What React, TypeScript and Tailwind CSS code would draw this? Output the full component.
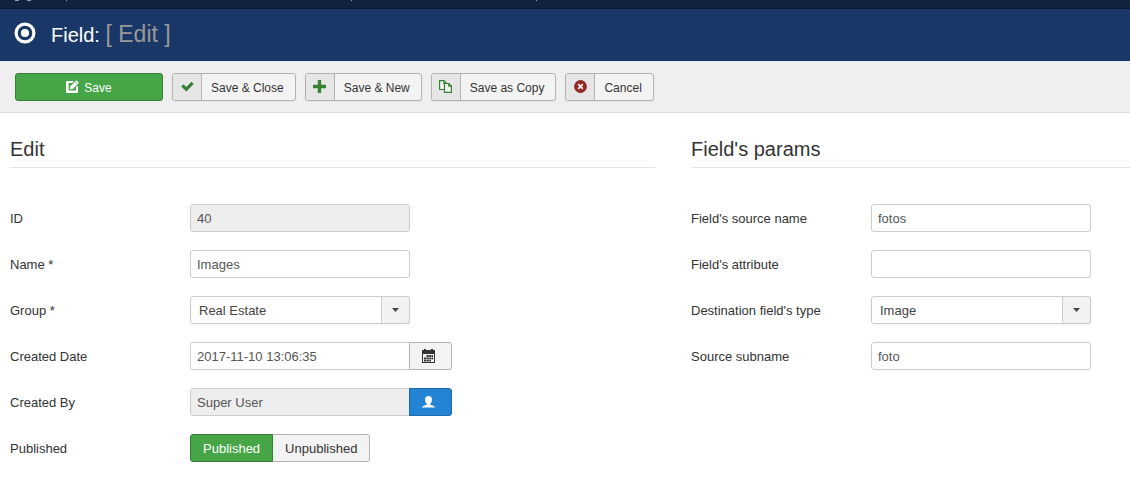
import { useState, type ReactNode } from 'react';

const font = "font-['Liberation_Sans',Arial,sans-serif]";
const inputBase = 'h-7 border border-[#ccc] px-1.5 text-[13px] text-[#555] outline-none';

function Row({ label, id, children }: { label: string; id: string; children: ReactNode }) {
  return (
    <div className="flex h-7 items-center">
      <label htmlFor={id} className="w-[180px] shrink-0 pt-0.5">{label}</label>
      {children}
    </div>
  );
}

function TextField({ label, id, value, readOnly = false }: { label: string; id: string; value: string; readOnly?: boolean }) {
  return (
    <Row label={label} id={id}>
      <input id={id} type="text" defaultValue={value} readOnly={readOnly}
        className={`${inputBase} w-[220px] rounded-[3px] ${readOnly ? 'bg-[#eee]' : 'bg-white'}`} />
    </Row>
  );
}

function SelectField({ label, id, options }: { label: string; id: string; options: string[] }) {
  return (
    <Row label={label} id={id}>
      <div className="relative w-[220px]">
        <select id={id} className="block h-7 w-full appearance-none rounded-[3px] border border-[#ccc] bg-white pt-0.5 pr-8 pl-2 text-[13px] text-[#444] shadow-[0_1px_2px_rgba(0,0,0,0.05)] outline-none">
          {options.map((o) => <option key={o}>{o}</option>)}
        </select>
        <span className="pointer-events-none absolute inset-y-0 right-0 flex w-[29px] items-center justify-center rounded-r-[3px] border border-[#ccc] bg-[#f2f2f2]">
          <svg width="7" height="4" viewBox="0 0 7 4" aria-hidden="true"><path d="M0 0h7L3.5 4z" fill="#444" /></svg>
        </span>
      </div>
    </Row>
  );
}

function ToolButton({ icon, children }: { icon: ReactNode; children: ReactNode }) {
  return (
    <button type="button" className="flex h-7 items-center rounded-[3px] border border-[#b3b3b3] bg-[#f3f3f3] shadow-[0_1px_2px_rgba(0,0,0,0.05)]">
      <span className="flex h-full w-[29px] items-center justify-center rounded-l-[2px] border-r border-[#b3b3b3] bg-[#e6e6e6]">{icon}</span>
      <span className="pt-0.5 pr-[11px] pl-[9px] whitespace-nowrap">{children}</span>
    </button>
  );
}

function TargetIcon() {
  return (
    <svg width="22" height="22" viewBox="0 0 22 22" aria-hidden="true">
      <circle cx="11" cy="11" r="8.9" fill="none" stroke="#fff" strokeWidth="3.2" />
      <circle cx="11" cy="11" r="4.1" fill="#fff" />
    </svg>
  );
}

function EditIcon() {
  return (
    <svg width="13" height="13" viewBox="0 0 13 13" aria-hidden="true">
      <path d="M1 1h7L6 3H2.6v7.4H10V7.2l2-2V12c0 .6-.4 1-1 1H1c-.6 0-1-.4-1-1V2c0-.6.4-1 1-1z" fill="#fff" />
      <path d="M4.4 6.2L10.4.2 13 2.8l-6 6-3.3.7z" fill="#fff" />
      <path d="M9 1.6L11.6 4.2" stroke="#46a546" strokeWidth=".6" />
    </svg>
  );
}

function CheckIcon() {
  return (
    <svg width="13" height="13" viewBox="0 0 13 13" aria-hidden="true">
      <path d="M.2 6.6l2.3-2.3 2.8 2.6L10.5 1.7l2.3 2.3-7.5 7.5z" fill="#378137" />
    </svg>
  );
}

function PlusIcon() {
  return (
    <svg width="13" height="13" viewBox="0 0 13 13" aria-hidden="true">
      <path d="M4.8 0h3.4v4.800H13v3.400H8.200V13H4.800V8.200H0V4.800h4.800z" fill="#378137" />
    </svg>
  );
}

function CopyIcon() {
  return (
    <svg width="13" height="13" viewBox="0 0 13 13" fill="#f5f5f5" stroke="#378137" strokeWidth="1.2" aria-hidden="true">
      <path d="M.6.6h4.300l2.600 2.600v6.300H.6z" />
      <path d="M4.900.6v2.700h2.600" fill="none" />
      <path d="M5.500 3.500h4.300l2.600 2.600v6.300H5.500z" />
      <path d="M9.700 3.500v2.700h2.700" fill="none" />
    </svg>
  );
}

function CancelIcon() {
  return (
    <svg width="13" height="13" viewBox="0 0 13 13" aria-hidden="true">
      <circle cx="6.5" cy="6.5" r="6.4" fill="#942a25" />
      <path d="M4.200 4.200l4.600 4.600M8.800 4.200L4.200 8.800" stroke="#eee" strokeWidth="1.800" />
    </svg>
  );
}

function CalendarIcon() {
  return (
    <svg width="13" height="14" viewBox="0 0 13 14" aria-hidden="true">
      <path d="M0 1h2V0h2v1h5V0h2v1h2v13H0z" fill="#333" />
      <path d="M1 5h11v8H1z" fill="#f3f3f3" />
      <path d="M4 6h7v2H4zM2 8.500h9v2H2zM2 11h7v1.500H2z" fill="#333" />
      <path d="M4.500 5v8M7 5v8M9.500 5v8" stroke="#f3f3f3" strokeWidth=".5" />
    </svg>
  );
}

function UserIcon() {
  return (
    <svg width="13" height="12" viewBox="0 0 13 12" aria-hidden="true">
      <path d="M6.500 0C4.300 0 3 1.300 3 3.500c0 1.900.7 3.300 1.700 4.100v1.100C2.700 9.200.3 9.700 0 11.500h13c-.3-1.800-2.700-2.300-4.700-2.800V7.600c1-.8 1.700-2.200 1.700-4.100C10 1.300 8.700 0 6.500 0z" fill="#fff" />
    </svg>
  );
}

export default function App() {
  const [published, setPublished] = useState(true);
  return (
    <div className={`min-h-screen bg-white text-[13px] leading-[18px] text-[#333] ${font}`}>
      <div className="h-[9px] overflow-hidden border-b border-[#0c192e] bg-[#10223e]">
        <svg className="block" width="560" height="2" viewBox="0 0 560 2" aria-hidden="true">
          <path d="M15 0h4v1h-4zM27 0h4v1h-4zM66 0h1v1h-1zM351 0h1v1h-1zM536 0h1v1h-1z" fill="#9aa0a8" />
        </svg>
      </div>
      <header className="flex h-[52px] items-center gap-[15px] bg-[#1a3867] px-3.5 pb-1 text-white">
        <TargetIcon />
        <h1 className="pt-0.5 text-[20px] leading-7">
          Field: <small className="text-[23px] text-[#999]">[ Edit ]</small>
        </h1>
      </header>
      <div className="flex h-[52px] items-center gap-[9px] border-b border-[#ddd] bg-[#efefef] px-[15px] text-[12px]">
        <button type="button" className="flex h-7 w-[148px] items-center justify-center gap-[5px] rounded-[3px] border border-[#378137] bg-[#46a546] text-white">
          <EditIcon /><span className="pt-0.5">Save</span>
        </button>
        <ToolButton icon={<CheckIcon />}>Save &amp; Close</ToolButton>
        <ToolButton icon={<PlusIcon />}>Save &amp; New</ToolButton>
        <ToolButton icon={<CopyIcon />}>Save as Copy</ToolButton>
        <ToolButton icon={<CancelIcon />}>Cancel</ToolButton>
      </div>
      <main className="grid grid-cols-[645fr_439fr] gap-9 pt-[18px] pl-2.5">
        <section>
          <h2 className="mb-9 border-b border-[#e5e5e5] text-[20px] leading-9">Edit</h2>
          <div className="flex flex-col gap-[18px]">
            <TextField label="ID" id="id" value="40" readOnly />
            <TextField label="Name *" id="name" value="Images" />
            <SelectField label="Group *" id="group" options={['Real Estate']} />
            <Row label="Created Date" id="created">
              <input id="created" type="text" defaultValue="2017-11-10 13:06:35" className={`${inputBase} w-[220px] rounded-l-[3px] bg-white`} />
              <button type="button" aria-label="Open the calendar" className="-ml-px flex h-7 w-[43px] items-center justify-center rounded-r-[3px] border border-[#b3b3b3] bg-[#f3f3f3] pr-1">
                <CalendarIcon />
              </button>
            </Row>
            <Row label="Created By" id="author">
              <input id="author" type="text" defaultValue="Super User" readOnly className={`${inputBase} w-[220px] rounded-l-[3px] bg-[#eee]`} />
              <button type="button" aria-label="Select user" className="-ml-px flex h-7 w-[43px] items-center justify-center rounded-r-[3px] border border-[#1a6aad] bg-[#2384d3] pr-1">
                <UserIcon />
              </button>
            </Row>
            <Row label="Published" id="published">
              <button id="published" type="button" aria-pressed={published} onClick={() => setPublished(true)}
                className={`h-7 rounded-l-[3px] border px-3 pt-0.5 ${published ? 'border-[#378137] bg-[#46a546] text-white' : 'border-[#b3b3b3] bg-[#f3f3f3]'}`}>
                Published
              </button>
              <button type="button" aria-pressed={!published} onClick={() => setPublished(false)}
                className={`h-7 rounded-r-[3px] border border-l-0 px-3 pt-0.5 ${published ? 'border-[#b3b3b3] bg-[#f3f3f3]' : 'border-[#942a25] bg-[#bd362f] text-white'}`}>
                Unpublished
              </button>
            </Row>
          </div>
        </section>
        <section>
          <h2 className="mb-9 border-b border-[#e5e5e5] text-[20px] leading-9">Field's params</h2>
          <div className="flex flex-col gap-[18px]">
            <TextField label="Field's source name" id="source" value="fotos" />
            <TextField label="Field's attribute" id="attribute" value="" />
            <SelectField label="Destination field's type" id="type" options={['Image']} />
            <TextField label="Source subname" id="subname" value="foto" />
          </div>
        </section>
      </main>
    </div>
  );
}
